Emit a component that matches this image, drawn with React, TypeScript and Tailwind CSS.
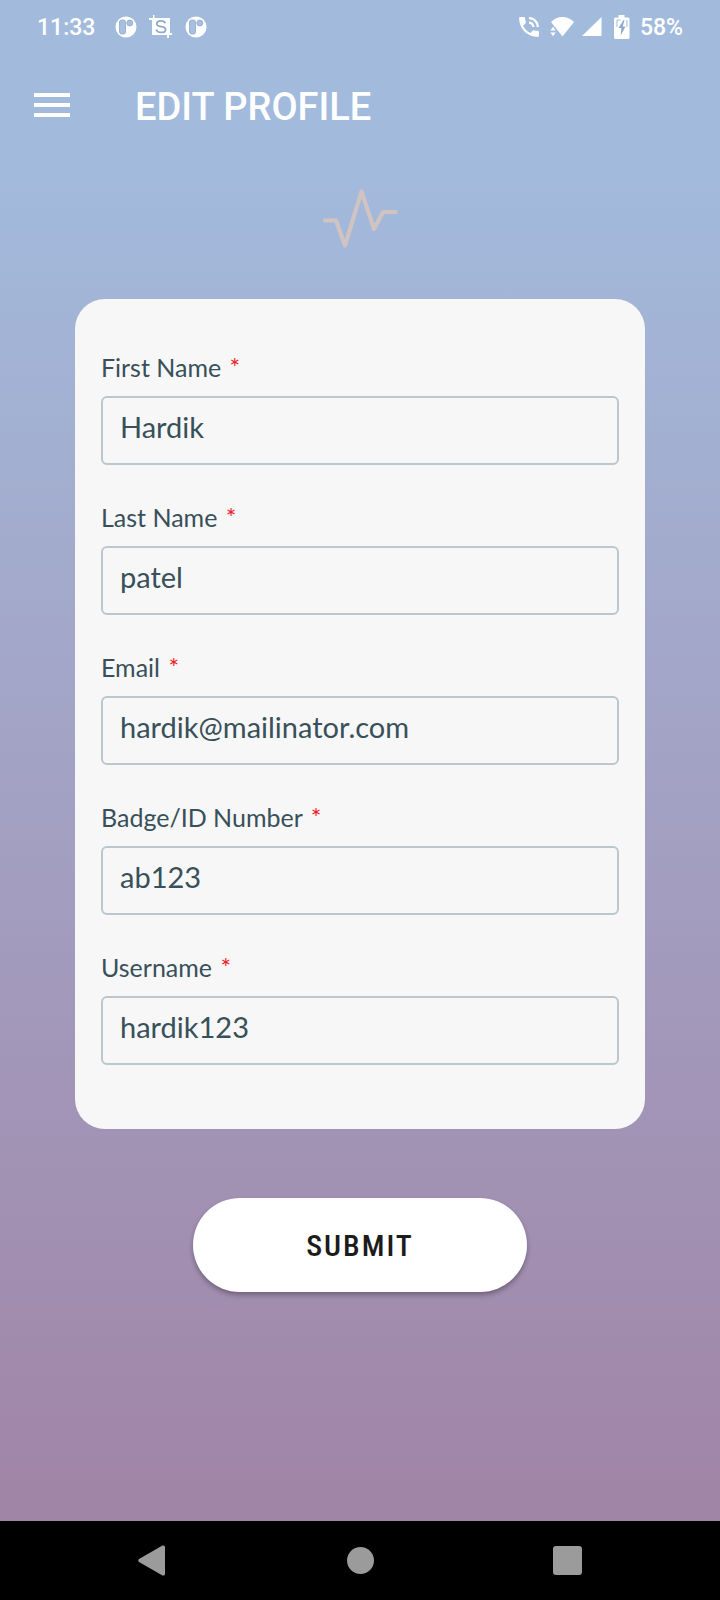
import { useState } from 'react'
import type { FormEvent } from 'react'
import { MdMenu } from 'react-icons/md'

interface Field {
    id: string
    label: string
    type: string
}

const FIELDS: Field[] = [
    { id: 'firstName', label: 'First Name', type: 'text' },
    { id: 'lastName', label: 'Last Name', type: 'text' },
    { id: 'email', label: 'Email', type: 'email' },
    { id: 'badge', label: 'Badge/ID Number', type: 'text' },
    { id: 'username', label: 'Username', type: 'text' },
]

function AppIcon() {
    return (
        <svg width="22" height="22" viewBox="0 0 22 22">
            <circle cx="11" cy="11" r="10.5" fill="#fff" />
            <rect x="4.500" y="4" width="6" height="14" rx="2" fill="#a8bfdf" stroke="#8fa9cd" strokeWidth="0.8" />
            <circle cx="14.8" cy="7" r="3" fill="#a8bfdf" stroke="#8fa9cd" strokeWidth="0.8" />
        </svg>
    )
}

function ScreenshotIcon() {
    return (
        <svg width="24" height="24" viewBox="0 0 24 24" fill="none">
            <path d="M4 0v3H0v2h3v15h15v3h2v-3h3v-2h-2V3H5.500V0z" fill="#fff" />
            <path
                d="M16.300 8.300C15.800 6.600 14.200 5.800 12 5.800c-2.400 0-4.200 1.100-4.200 2.900 0 4.200 8.800 1.700 8.800 5.700 0 1.900-1.900 3-4.400 3-2.600 0-4.400-1-4.800-3"
                stroke="#8fa9cd"
                strokeWidth="1.800"
            />
        </svg>
    )
}

function StatusBar() {
    return (
        <div className="flex h-[54px] items-center justify-between px-[37px] text-[23px] font-medium text-white">
            <div className="flex items-center">
                <span className="pt-0.5">11:33</span>
                <div className="ml-5 flex items-center gap-3">
                    <AppIcon />
                    <ScreenshotIcon />
                    <AppIcon />
                </div>
            </div>
            <div className="flex items-center">
                <svg width="22" height="22" viewBox="2 2 20 20" fill="#fff" className="mr-[10px]">
                    <path d="M20 15.500c-1.250 0-2.450-.2-3.570-.57-.1-.03-.21-.05-.31-.05-.26 0-.51.1-.71.290l-2.200 2.200c-2.830-1.440-5.150-3.750-6.590-6.590l2.200-2.200c.28-.28.36-.67.25-1.020C8.700 6.450 8.500 5.250 8.500 4c0-.55-.45-1-1-1H4c-.55 0-1 .45-1 1 0 9.390 7.610 17 17 17 .55 0 1-.45 1-1v-3.500c0-.55-.45-1-1-1zM19 12h2c0-4.970-4.030-9-9-9v2c3.870 0 7 3.130 7 7zm-4 0h2c0-2.760-2.240-5-5-5v2c1.660 0 3 1.340 3 3z" />
                </svg>
                <svg width="24" height="20" viewBox="0 0 24 20" fill="#fff" className="mr-2">
                    <path d="M1 5C4.500 1.500 8 0 12.500 0s8 1.500 11.500 5L12.500 19.500z" />
                    <path d="M-.5 14l3.500-5 3.500 5zM-.5 15h7L3 20z" stroke="#a2bbdd" strokeWidth="1" />
                </svg>
                <svg width="20" height="20" viewBox="0 0 20 20" fill="#fff" className="mr-3">
                    <path d="M0 19L19.500 0v19z" />
                </svg>
                <svg width="16" height="24" viewBox="0 0 16 24" fill="#fff" className="mr-[10px]">
                    <path d="M4.500 0h6v2.500h3.500a1.500 1.500 0 0 1 1.500 1.500v18.500a1.500 1.500 0 0 1-1.500 1.500H1.500A1.500 1.500 0 0 1 0 22.500V4a1.500 1.500 0 0 1 1.500-1.500h3z" />
                    <path d="M9.500 5L4.500 13h2.800l-.6 7.500L11.500 11.500H8.700l1.800-6.500z" fill="#8fa9cd" />
                    <path d="M3 12V5h3.500M13 5v7" stroke="#a2bbdd" fill="none" strokeWidth="1" />
                </svg>
                <span className="pt-0.5">58%</span>
            </div>
        </div>
    )
}

function NavBar() {
    return (
        <nav className="flex h-[79px] items-center justify-between bg-black px-[138px]">
            <button type="button" aria-label="Back" className="w-[29px]">
                <svg width="27" height="31" viewBox="0 0 27 31" fill="#9b9b9b">
                    <path d="M1 14Q-.5 15.500 1 17L24.500 30.500Q27 31 27 29V2Q27 0 24.500.5z" />
                </svg>
            </button>
            <button type="button" aria-label="Home" className="size-[27px] rounded-full bg-[#9b9b9b]" />
            <button type="button" aria-label="Recent apps" className="size-[29px] rounded-[3px] bg-[#9b9b9b]" />
        </nav>
    )
}

export default function App() {
    const [values, setValues] = useState<Record<string, string>>({
        firstName: 'Hardik',
        lastName: 'patel',
        email: 'hardik@mailinator.com',
        badge: 'ab123',
        username: 'hardik123',
    })

    const handleSubmit = (e: FormEvent) => {
        e.preventDefault()
    }

    return (
        <div className="flex min-h-screen flex-col bg-black font-[Roboto,sans-serif]">
            <div className="flex flex-1 flex-col bg-linear-to-b from-[#a2bbdd] from-10% to-[#a084a6]">
                <StatusBar />

                <header className="flex h-[102px] items-center pl-7 text-white">
                    <button type="button" aria-label="Menu">
                        <MdMenu size={48} />
                    </button>
                    <h1 className="ml-[59px] pt-1 text-[38px] font-medium">EDIT PROFILE</h1>
                </header>

                <svg width="76" height="62" viewBox="0 0 76 62" className="mt-8 mb-[49px] self-center">
                    <path
                        d="M3 32.500H14L23 57.500L39.500 3.500L52 41L61 24H73.500"
                        fill="none"
                        stroke="#d0c3c2"
                        strokeWidth="4.200"
                        strokeLinecap="round"
                        strokeLinejoin="round"
                    />
                </svg>

                <form onSubmit={handleSubmit} className="flex flex-col px-[75px] pb-10">
                    <div className="flex flex-col gap-[37px] rounded-[30px] bg-[#f7f7f7] px-[26px] pt-[53px] pb-16 font-[Lato,sans-serif] text-[#38505a]">
                        {FIELDS.map((field) => (
                            <div key={field.id} className="flex flex-col gap-[14px]">
                                <label htmlFor={field.id} className="text-[25px] leading-[30px]">
                                    {field.label} <span className="ml-0.5 text-[#ee1c25]">*</span>
                                </label>
                                <input
                                    id={field.id}
                                    type={field.type}
                                    required
                                    value={values[field.id]}
                                    onChange={(e) => setValues({ ...values, [field.id]: e.target.value })}
                                    className="h-[69px] w-full rounded-[6px] border-2 border-[#b8c8ce] bg-transparent px-[17px] pb-2 text-[29px] outline-none"
                                />
                            </div>
                        ))}
                    </div>

                    <button
                        type="submit"
                        className="mt-[69px] h-[94px] w-[334px] self-center rounded-full bg-white font-['Liberation_Sans_Narrow','Roboto_Condensed',Roboto,sans-serif] text-[30px] font-medium tracking-[2px] text-[#1c1c1c] shadow-[0_3px_5px_rgba(0,0,0,0.3)]"
                    >
                        SUBMIT
                    </button>
                </form>
            </div>
            <NavBar />
        </div>
    )
}
